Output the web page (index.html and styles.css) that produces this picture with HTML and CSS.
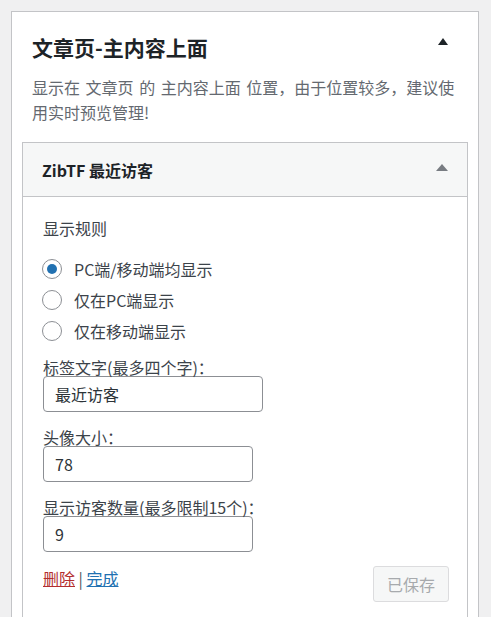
FILE: index.html
```html
<!DOCTYPE html>
<html>
<head>
	<title>ZibTF 最近访客</title>
<link rel="stylesheet" href="styles.css">
</head>
<body>
	<div class="card">
		<div class="card-head">
			<h2 class="card-title">文章页-主内容上面</h2>
			<span class="toggle"></span>
		</div>
		<p class="card-desc">显示在 文章页 的 主内容上面 位置，由于位置较多，建议使用实时预览管理!</p>

		<div class="widget">
			<div class="widget-head">
				<h3 class="widget-title">ZibTF 最近访客</h3>
				<span class="toggle toggle-gray"></span>
			</div>
			<div class="widget-body">
				<p class="rule-title">显示规则</p>
				<div class="radios">
					<label class="radio-row"><input type="radio" name="show" checked> PC端/移动端均显示</label>
					<label class="radio-row"><input type="radio" name="show"> 仅在PC端显示</label>
					<label class="radio-row"><input type="radio" name="show"> 仅在移动端显示</label>
				</div>

				<div class="field first">
					<label class="field-label">标签文字(最多四个字)：</label>
					<input class="text-input wide" type="text" value="最近访客">
				</div>
				<div class="field">
					<label class="field-label">头像大小：</label>
					<input class="text-input" type="text" value="78">
				</div>
				<div class="field">
					<label class="field-label">显示访客数量(最多限制15个)：</label>
					<input class="text-input" type="text" value="9">
				</div>

				<div class="widget-foot">
					<div class="links">
						<a href="#" class="link-delete">删除</a> | <a href="#" class="link-done">完成</a>
					</div>
					<button class="save-btn" disabled>已保存</button>
				</div>
			</div>
		</div>
	</div>
</body>
</html>
```

FILE: styles.css
```css
body {
  margin: 0;
  padding: 11px 0 0 11px;
  background-color: #f0f0f1;
  font-family: "Noto Sans CJK SC", "Noto Sans", sans-serif;
  font-size: 16px;
  color: #3c434a;
}

.card {
  width: 468px;
  box-sizing: border-box;
  background-color: #fff;
  border: 1px solid #c3c4c7;
  border-bottom: none;
  padding: 0 10px 40px 10px;
}

.card-head {
  display: flex;
  justify-content: space-between;
  align-items: flex-start;
  padding: 22px 20px 0 10px;
}

.card-title {
  margin: 0;
  font-size: 21px;
  line-height: 27px;
  font-weight: 700;
  color: #1d2327;
}

.toggle {
  width: 0;
  height: 0;
  margin-top: 4px;
  border-left: 5px solid transparent;
  border-right: 5px solid transparent;
  border-bottom: 7px solid #1d2327;
}

.toggle-gray {
  margin-top: 0;
  margin-bottom: 4px;
  border-left-width: 6px;
  border-right-width: 6px;
  border-bottom-color: #787c82;
}

.card-desc {
  margin: 14px 10px 17px 10px;
  line-height: 25px;
  word-spacing: 2px;
  color: #646970;
}

.widget {
  border: 1px solid #c3c4c7;
}

.widget-head {
  display: flex;
  justify-content: space-between;
  align-items: center;
  height: 53px;
  padding: 0 19px 0 19px;
  background-color: #f6f7f7;
  border-bottom: 1px solid #c3c4c7;
}

.widget-title {
  margin: 0;
  font-size: 16px;
  font-weight: 700;
  color: #1d2327;
}

.widget-body {
  padding: 19px 18px 40px 20px;
}

.rule-title {
  margin: 0;
  line-height: 24px;
}

.radios {
  margin-top: 13px;
}

.radio-row {
  display: flex;
  align-items: center;
  gap: 12px;
  height: 31px;
  margin-left: -1px;
}

.radio-row input {
  appearance: none;
  margin: 0;
  width: 20px;
  height: 20px;
  border: 1px solid #8c8f94;
  border-radius: 50%;
  background-color: #fff;
  display: flex;
  align-items: center;
  justify-content: center;
}

.radio-row input:checked::before {
  content: "";
  width: 10px;
  height: 10px;
  border-radius: 50%;
  background-color: #2271b1;
}

.field {
  margin-top: 16px;
}

.field.first {
  margin-top: 12px;
}

.field-label {
  display: block;
  line-height: 18px;
}

.text-input {
  display: block;
  box-sizing: border-box;
  width: 210px;
  height: 36px;
  margin: 0;
  padding: 0 11px;
  border: 1px solid #8c8f94;
  border-radius: 4px;
  font-family: inherit;
  font-size: 16px;
  color: #2c3338;
}

.text-input.wide {
  width: 220px;
}

.widget-foot {
  display: flex;
  justify-content: space-between;
  align-items: flex-start;
  margin-top: 14px;
}

.links {
  line-height: 24px;
  color: #50575e;
}

.link-delete {
  color: #b32d2e;
}

.link-done {
  color: #2271b1;
}

.save-btn {
  width: 76px;
  height: 36px;
  background-color: #f6f7f7;
  border: 1px solid #dcdcde;
  border-radius: 3px;
  color: #a7aaad;
  font-family: inherit;
  font-size: 16px;
}
```
